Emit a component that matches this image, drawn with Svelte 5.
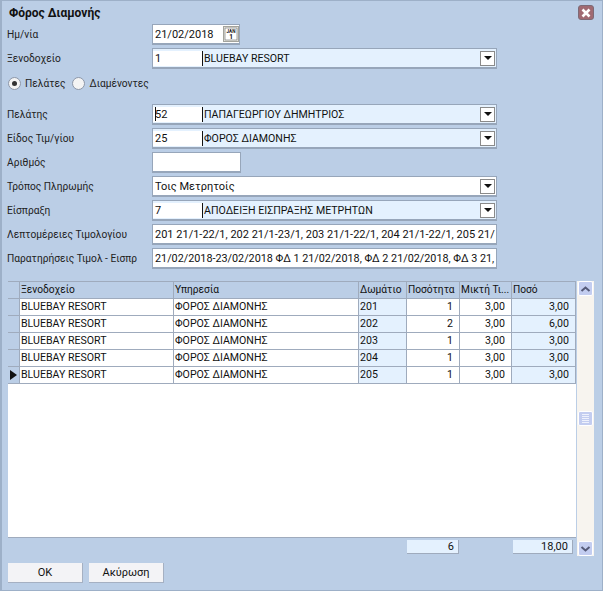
<script>
  const columns = [
    { title: 'Ξενοδοχείο', key: 'hotel', cls: '' },
    { title: 'Υπηρεσία', key: 'service', cls: '' },
    { title: 'Δωμάτιο', key: 'room', cls: 'tint' },
    { title: 'Ποσότητα', key: 'qty', cls: 'num' },
    { title: 'Μικτή Τι...', key: 'price', cls: 'num' },
    { title: 'Ποσό', key: 'total', cls: 'num tint' }
  ];

  const rows = [
    { room: '201', qty: 1, price: '3,00', total: '3,00' },
    { room: '202', qty: 2, price: '3,00', total: '6,00' },
    { room: '203', qty: 1, price: '3,00', total: '3,00' },
    { room: '204', qty: 1, price: '3,00', total: '3,00' },
    { room: '205', qty: 1, price: '3,00', total: '3,00' }
  ].map((r) => ({ hotel: 'BLUEBAY RESORT', service: 'ΦΟΡΟΣ ΔΙΑΜΟΝΗΣ', ...r }));
</script>

{#snippet arrow()}
  <span class="drop"><i></i></span>
{/snippet}

{#snippet lookup(code, text)}
  <div class="box lookup">
    <span class="code">{code}</span>
    <span class="name">{text}</span>
    {@render arrow()}
  </div>
{/snippet}

<div class="dialog">
  <header>
    <h1>Φόρος Διαμονής</h1>
    <button class="close" aria-label="close">
      <svg width="10" height="10" viewBox="0 0 10 10"><path d="M1.5 1.5l7 7M8.5 1.5l-7 7" stroke="#fff" stroke-width="2.6" /></svg>
    </button>
  </header>

  <div class="form top">
    <div class="row">
      <label>Ημ/νία</label>
      <div class="box date">
        <span>21/02/2018</span>
        <svg class="cal" width="16" height="16" viewBox="0 0 16 16">
          <rect x=".5" y=".5" width="15" height="15" fill="#ecebe4" stroke="#a3a39c" />
          <rect x="2" y="2" width="12" height="12" fill="#fff" stroke="#666" stroke-width=".6" />
          <text x="8" y="7" text-anchor="middle" class="month">JAN</text>
          <text x="8" y="13" text-anchor="middle" class="day">1</text>
        </svg>
      </div>
    </div>
    <div class="row">
      <label>Ξενοδοχείο</label>
      {@render lookup('1', 'BLUEBAY RESORT')}
    </div>
  </div>

  <div class="radios">
    <span class="radio on"><i></i>Πελάτες</span>
    <span class="radio"><i></i>Διαμένοντες</span>
  </div>

  <div class="form">
    <div class="row">
      <label>Πελάτης</label>
      <div class="box lookup">
        <span class="code"><b class="caret"></b>52</span>
        <span class="name">ΠΑΠΑΓΕΩΡΓΙΟΥ ΔΗΜΗΤΡΙΟΣ</span>
        {@render arrow()}
      </div>
    </div>
    <div class="row">
      <label>Είδος Τιμ/γίου</label>
      {@render lookup('25', 'ΦΟΡΟΣ ΔΙΑΜΟΝΗΣ')}
    </div>
    <div class="row">
      <label>Αριθμός</label>
      <div class="box short"></div>
    </div>
    <div class="row">
      <label>Τρόπος Πληρωμής</label>
      <div class="box plain">
        <span class="text">Τοις Μετρητοίς</span>
        {@render arrow()}
      </div>
    </div>
    <div class="row">
      <label>Είσπραξη</label>
      {@render lookup('7', 'ΑΠΟΔΕΙΞΗ ΕΙΣΠΡΑΞΗΣ ΜΕΤΡΗΤΩΝ')}
    </div>
    <div class="row">
      <label>Λεπτομέρειες Τιμολογίου</label>
      <div class="box plain"><span class="text">201 21/1-22/1, 202 21/1-23/1, 203 21/1-22/1, 204 21/1-22/1, 205 21/</span></div>
    </div>
    <div class="row">
      <label>Παρατηρήσεις Τιμολ - Εισπρ</label>
      <div class="box plain"><span class="text remarks">21/02/2018-23/02/2018 ΦΔ 1 21/02/2018, ΦΔ 2 21/02/2018, ΦΔ 3 21,</span></div>
    </div>
  </div>

  <section class="gridwrap">
    <div class="main">
      <div class="table">
        <div class="tr head">
          <span class="ind"></span>
          {#each columns as c}
            <span class="cell">{c.title}</span>
          {/each}
        </div>
        {#each rows as r, i}
          <div class="tr">
            <span class="ind">
              {#if i === rows.length - 1}<b class="current"></b>{/if}
            </span>
            {#each columns as c}
              <span class="cell {c.cls}">{r[c.key]}</span>
            {/each}
          </div>
        {/each}
      </div>
      <div class="totals">
        <span class="sum qty">6</span>
        <span class="sum amount">18,00</span>
      </div>
    </div>

    <div class="scroll">
      <span class="sbtn">
        <svg width="11" height="8" viewBox="0 0 11 8"><path d="M1.5 6l4-3.5 4 3.5" fill="none" stroke="#555a78" stroke-width="2" /></svg>
      </span>
      <span class="thumb"><i></i><i></i><i></i><i></i><i></i></span>
      <span class="sbtn">
        <svg width="11" height="8" viewBox="0 0 11 8"><path d="M1.5 2l4 3.5 4-3.5" fill="none" stroke="#555a78" stroke-width="2" /></svg>
      </span>
    </div>
  </section>

  <footer>
    <button class="btn">OK</button>
    <button class="btn">Ακύρωση</button>
  </footer>
</div>

<style>
  :global(body) {
    margin: 0;
    background: #bbcee6;
  }

  .dialog {
    width: 603px;
    height: 591px;
    box-sizing: border-box;
    background: #bbcee6;
    border: 1px solid #9db0c8;
    border-left-width: 2px;
    padding: 0 6px 0 5px;
    font-family: Roboto, Tahoma, sans-serif;
    font-size: 11px;
    color: #111;
    overflow: hidden;
  }

  header {
    height: 23px;
    display: flex;
    align-items: center;
    justify-content: space-between;
    padding: 0 2px 0 2px;
  }

  h1 {
    margin: 0;
    font-size: 12px;
    font-weight: 700;
    color: #111;
  }

  .close {
    width: 16px;
    height: 15px;
    padding: 0;
    display: flex;
    align-items: center;
    justify-content: center;
    background: #a06a72;
    border: 1px solid #7d6a76;
    border-radius: 3px;
  }

  .form {
    display: flex;
    flex-direction: column;
    gap: 3px;
  }

  .row {
    display: flex;
    align-items: center;
    height: 21px;
  }

  label {
    width: 145px;
    flex: none;
    color: #222;
    font-size: 10.2px;
  }

  .box {
    box-sizing: border-box;
    width: 345px;
    height: 21px;
    display: flex;
    align-items: center;
    background: #fff;
    border: 1px solid #97a6ba;
    border-bottom-width: 2px;
    white-space: nowrap;
    overflow: hidden;
  }

  .date {
    width: 88px;
    padding: 0 0 0 2px;
    justify-content: space-between;
  }

  .cal {
    flex: none;
    margin-top: -1px;
  }

  .month {
    font-size: 4.6px;
    font-weight: 700;
    fill: #111;
  }

  .day {
    font-size: 6.5px;
    font-weight: 700;
    fill: #111;
  }

  .short {
    width: 89px;
  }

  .lookup {
    background: #e4f1fe;
  }

  .code {
    position: relative;
    width: 50px;
    height: 15px;
    flex: none;
    padding-left: 2px;
    box-sizing: border-box;
    display: flex;
    align-items: center;
    border-right: 1px solid #111;
    background: #fff;
  }

  .caret {
    position: absolute;
    left: 2px;
    top: 0;
    width: 4px;
    height: 14px;
    border-left: 1px solid #111;
  }

  .name {
    flex: 1;
    padding-left: 1px;
    min-width: 0;
    font-size: 10.6px;
  }

  .text {
    flex: 1;
    padding-left: 2px;
    min-width: 0;
    overflow: hidden;
  }

  .remarks {
    font-size: 10.8px;
  }

  .drop {
    flex: none;
    box-sizing: border-box;
    width: 15px;
    height: 15px;
    margin-right: 1px;
    display: flex;
    align-items: center;
    justify-content: center;
    background: #fff;
    border: 1px solid #8a8a8a;
  }

  .drop i {
    width: 0;
    height: 0;
    border-left: 4px solid transparent;
    border-right: 4px solid transparent;
    border-top: 4px solid #111;
  }

  .radios {
    height: 28px;
    padding-bottom: 7px;
    display: flex;
    align-items: center;
    gap: 7px;
    padding-left: 1px;
    font-size: 10.2px;
  }

  .radio {
    display: flex;
    align-items: center;
    gap: 4px;
    color: #222;
  }

  .radio i {
    box-sizing: border-box;
    width: 13px;
    height: 13px;
    display: flex;
    align-items: center;
    justify-content: center;
    border-radius: 50%;
    border: 1px solid #8d97a8;
    background: #f4f4f4;
  }

  .radio.on i::after {
    content: "";
    width: 5px;
    height: 5px;
    border-radius: 50%;
    background: #333;
  }

  .gridwrap {
    margin-top: 12px;
    margin-left: 1px;
    display: flex;
    height: 275px;
  }

  .main {
    width: 568px;
    flex: none;
    display: flex;
    flex-direction: column;
  }

  .table {
    height: 257px;
    background: #fff;
    border-bottom: 1px solid #9fabbd;
    box-sizing: border-box;
  }

  .tr {
    display: grid;
    grid-template-columns: 12px 154px 185px 48px 53px 52px 64px;
    height: 17px;
    box-sizing: border-box;
    border-bottom: 1px solid #9fabbd;
    font-size: 10.6px;
  }

  .tr.head {
    height: 18px;
    background: #bbcee6;
    border-top: 1px solid #9fabbd;
    font-size: 10.2px;
  }

  .ind {
    background: #bbcee6;
    border-right: 1px solid #9fabbd;
    display: flex;
    align-items: center;
  }

  .current {
    width: 0;
    height: 0;
    margin-left: 2px;
    border-top: 5px solid transparent;
    border-bottom: 5px solid transparent;
    border-left: 7px solid #111;
  }

  .cell {
    box-sizing: border-box;
    padding: 0 2px 0 1px;
    line-height: 16px;
    border-right: 1px solid #9fabbd;
    white-space: nowrap;
    overflow: hidden;
  }

  .num {
    text-align: right;
    padding-right: 6px;
  }

  .tint {
    background: #e4f1fe;
  }

  .totals {
    height: 18px;
    position: relative;
  }

  .sum {
    position: absolute;
    top: 2px;
    height: 14px;
    line-height: 14px;
    box-sizing: border-box;
    padding-right: 4px;
    text-align: right;
    background: #e4f1fe;
    border-right: 1px solid #9fabbd;
    border-bottom: 1px solid #9fabbd;
  }

  .sum.qty {
    left: 399px;
    width: 52px;
  }

  .sum.amount {
    left: 505px;
    width: 60px;
  }

  .scroll {
    width: 17px;
    margin-left: 1px;
    height: 275px;
    background: #f7f4ef;
    display: flex;
    flex-direction: column;
    align-items: center;
    box-sizing: border-box;
  }

  .sbtn {
    width: 15px;
    height: 15px;
    flex: none;
    display: flex;
    align-items: center;
    justify-content: center;
    background: #c3cdf0;
    border: 1px solid #fff;
    border-radius: 2px;
    box-sizing: border-box;
  }

  .thumb {
    margin: 115px 0 auto;
    width: 15px;
    height: 15px;
    flex: none;
    box-sizing: border-box;
    background: #c3cdf0;
    border: 1px solid #fff;
    border-radius: 2px;
    display: flex;
    flex-direction: column;
    align-items: center;
    justify-content: center;
    gap: 1px;
  }

  .thumb i {
    width: 7px;
    height: 1px;
    background: #eef1fc;
  }

  footer {
    display: flex;
    gap: 6px;
    margin-top: 7px;
    margin-left: 1px;
  }

  .btn {
    width: 75px;
    height: 20px;
    padding: 0;
    font: inherit;
    color: #111;
    background: #f3f3f6;
    border: 0;
    border-right: 1px solid #a5b0c2;
    border-bottom: 1px solid #a5b0c2;
  }
</style>
